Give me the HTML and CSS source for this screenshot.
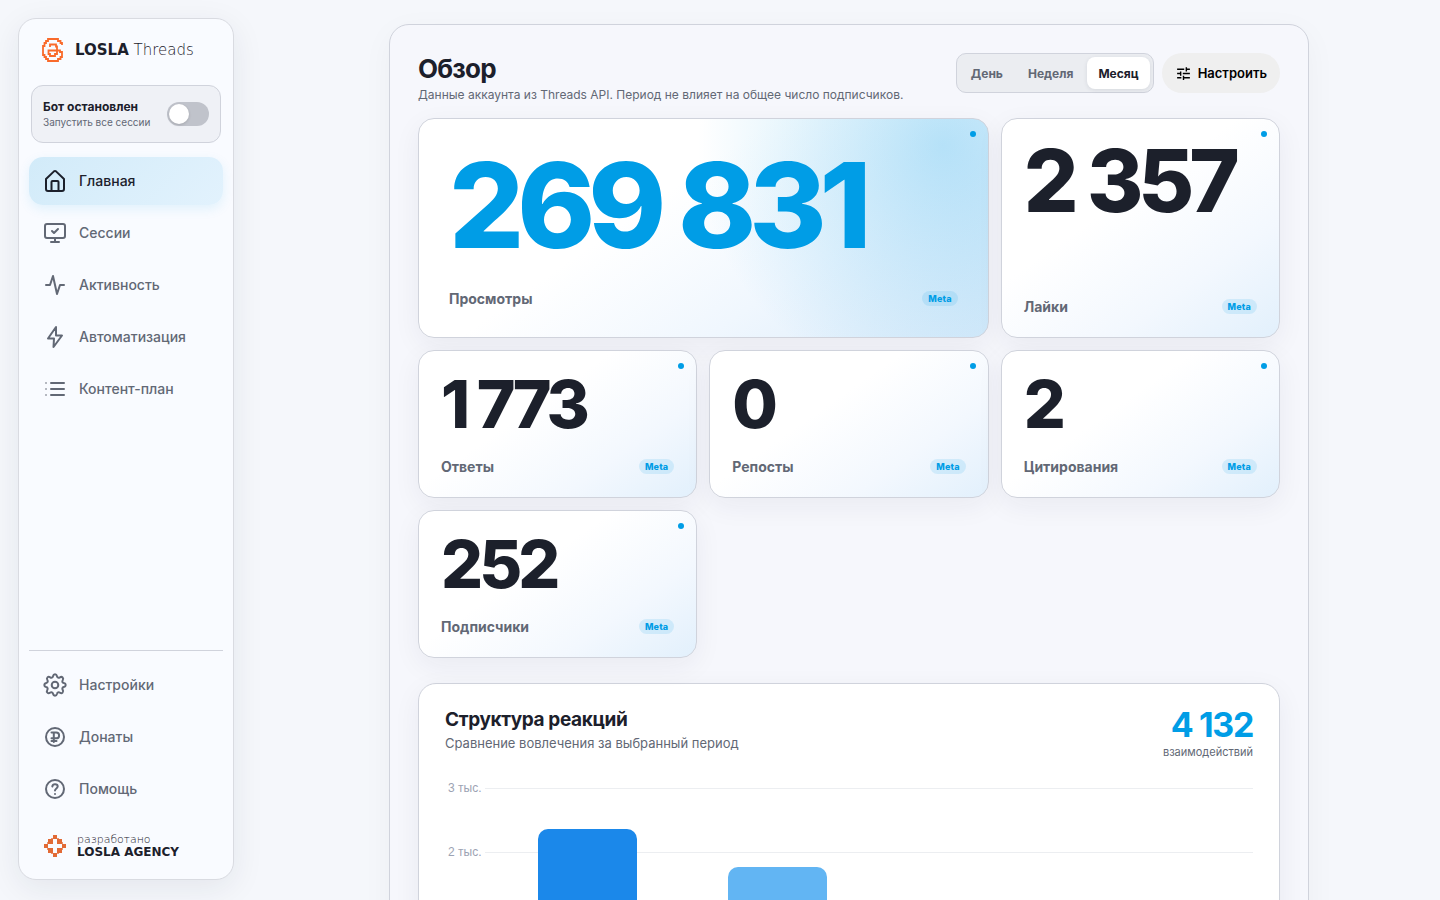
FILE: index.html
```html
<!DOCTYPE html>
<html lang="ru">
  <head>
    <meta charset="UTF-8" />
    <meta name="viewport" content="width=device-width, initial-scale=1.0" />
    <title>LOSLA Threads</title>
    <link rel="stylesheet" href="styles.css">
  </head>
  <body>
    <div class="app">
      <aside class="sidebar">
        <a class="brand" href="#">
          <svg class="brand-icon" viewBox="-1 0 24 24" fill="none" stroke="#f96a2b" stroke-width="1.8" aria-hidden="true">
            <path d="M20 7V5h-1.500V3H16V1H6v2H4v2H2.500v3H1v9h1.500v2H4v2h2v2h10v-2h2.500v-2H20v-5h-2v-1.500H6.500V16H8v2h5v-2h2V8.500h-1v-2H8V9" />
          </svg>
          <span class="brand-name"><b>LOSLA</b> <span>Threads</span></span>
        </a>

        <div class="bot">
          <label class="bot-text" for="botToggle">
            <strong>Бот остановлен</strong>
            <small>Запустить все сессии</small>
          </label>
          <input class="switch" type="checkbox" role="switch" id="botToggle" />
        </div>

        <nav class="nav">
          <a class="nav-item active" href="#">
            <svg viewBox="0 0 24 24"><path d="M3 10 10.700 2.600a2 2 0 0 1 2.600 0L21 10v10a2 2 0 0 1-2 2H5a2 2 0 0 1-2-2zM8.500 22v-9a1 1 0 0 1 1-1h5a1 1 0 0 1 1 1v9" /></svg>
            Главная
          </a>
          <a class="nav-item" href="#">
            <svg viewBox="0 0 24 24"><rect x="2" y="3" width="20" height="14" rx="2" /><path d="M8 21h8M12 17v4M9 10l2 2 4-4" /></svg>
            Сессии
          </a>
          <a class="nav-item" href="#">
            <svg viewBox="0 0 24 24"><path d="M3 12h4l3-9 4 18 3-9h4" /></svg>
            Активность
          </a>
          <a class="nav-item" href="#">
            <svg viewBox="0 0 24 24"><path d="M13 2 5 13.500h6L10.500 22 19 10.500h-6z" /></svg>
            Автоматизация
          </a>
          <a class="nav-item" href="#">
            <svg viewBox="0 0 24 24"><path d="M8 6h13M8 12h13M8 18h13" /><path class="dots" d="M3 6h.01M3 12h.01M3 18h.01" /></svg>
            Контент-план
          </a>
        </nav>

        <nav class="nav nav-bottom">
          <a class="nav-item" href="#">
            <svg viewBox="0 0 24 24"><path d="M10 3.200C10.300 1.800 11 1.300 12 1.300s1.700.5 2 1.900c.3 1.500 1.600 2 2.900 1.200 1.200-.8 2-.6 2.700.1s.8 1.500.1 2.700c-.8 1.300-.3 2.600 1.200 2.900 1.300.2 1.800.9 1.800 1.900s-.5 1.700-1.900 2c-1.400.3-1.900 1.600-1.100 2.900.8 1.200.6 2-.1 2.700s-1.500.8-2.700.1c-1.300-.8-2.600-.3-2.900 1.200-.3 1.300-1 1.800-2 1.800s-1.700-.5-2-1.900c-.3-1.400-1.600-1.900-2.900-1.100-1.200.7-2 .6-2.700-.1s-.8-1.500-.1-2.700c.8-1.300.3-2.600-1.200-2.900C1.800 13.700 1.300 13 1.300 12s.5-1.700 1.900-2c1.500-.3 2-1.600 1.200-2.900-.7-1.200-.6-2 .1-2.700s1.500-.8 2.700-.1C8.400 5.100 9.700 4.700 10 3.200z" /><circle cx="12" cy="12" r="3.300" /></svg>
            Настройки
          </a>
          <a class="nav-item" href="#">
            <svg viewBox="0 0 24 24"><circle cx="12" cy="12" r="9" /><path d="M10.800 17V7.500M8.500 7.500h4.700a2.900 2.900 0 0 1 0 5.800H8.500M8.500 16h5" /></svg>
            Донаты
          </a>
          <a class="nav-item" href="#">
            <svg viewBox="0 0 24 24"><circle cx="12" cy="12" r="9" /><path d="M9.300 9.500c.2-1.400 1.300-2.200 2.700-2.200 1.600 0 2.700 1 2.700 2.300 0 1.800-2.700 2-2.700 3.900M12 17h.01" /></svg>
            Помощь
          </a>
        </nav>

        <a class="agency" href="#">
          <svg class="agency-icon" viewBox="0 0 22 22" fill="#e26a35" aria-hidden="true">
            <path d="M9 0h4v4H9zM9 18h4v4H9zM0 9h4v4H0zM18 9h4v4h-4zM4 4h5v5H4zM13 4h5v5h-5zM4 13h5v5H4zM13 13h5v5h-5z" />
            <path opacity="0.7" d="M7 3h2v1H7zM13 3h2v1h-2zM3 7h1v2H3zM18 7h1v2h-1zM3 13h1v2H3zM18 13h1v2h-1zM7 18h2v1H7zM13 18h2v1h-2z" />
          </svg>
          <span class="agency-name"><span>разработано</span><b>LOSLA AGENCY</b></span>
        </a>
      </aside>

      <main class="main">
        <section class="panel">
          <header class="panel-head">
            <div>
              <h1>Обзор</h1>
              <p>Данные аккаунта из Threads API. Период не влияет на общее число подписчиков.</p>
            </div>
            <div class="controls">
              <div class="periods">
                <button type="button">День</button>
                <button type="button">Неделя</button>
                <button type="button" class="active">Месяц</button>
              </div>
              <button type="button" class="customize">
                <svg viewBox="0 0 24 24" fill="currentColor" aria-hidden="true"><path d="M3 17v2h6v-2H3zM3 5v2h10V5H3zm10 16v-2h8v-2h-8v-2h-2v6h2zM7 9v2H3v2h4v2h2V9H7zm14 4v-2H11v2h10zm-6-4h2V7h4V5h-4V3h-2v6z" /></svg>
                Настроить
              </button>
            </div>
          </header>

          <div class="stats">
            <article class="stat stat-main">
              <div class="value">269 831</div>
              <div class="stat-foot">Просмотры <span class="badge">Meta</span></div>
            </article>
            <article class="stat stat-tall">
              <div class="value">2 357</div>
              <div class="stat-foot">Лайки <span class="badge">Meta</span></div>
            </article>
            <article class="stat">
              <div class="value">1 773</div>
              <div class="stat-foot">Ответы <span class="badge">Meta</span></div>
            </article>
            <article class="stat">
              <div class="value">0</div>
              <div class="stat-foot">Репосты <span class="badge">Meta</span></div>
            </article>
            <article class="stat">
              <div class="value">2</div>
              <div class="stat-foot">Цитирования <span class="badge">Meta</span></div>
            </article>
            <article class="stat">
              <div class="value">252</div>
              <div class="stat-foot">Подписчики <span class="badge">Meta</span></div>
            </article>
          </div>

          <section class="chart-card">
            <header class="chart-head">
              <div>
                <h2>Структура реакций</h2>
                <p>Сравнение вовлечения за выбранный период</p>
              </div>
              <div class="total"><strong>4 132</strong><span>взаимодействий</span></div>
            </header>
            <div class="chart">
              <div class="grid-lines">
                <div class="tick">3 тыс.</div>
                <div class="tick">2 тыс.</div>
                <div class="tick"></div>
                <div class="tick"></div>
              </div>
              <div class="bars">
                <div class="bar likes" style="height: 78.57%"></div>
                <div class="bar replies" style="height: 59.1%"></div>
                <div class="bar reposts" style="height: 0%"></div>
                <div class="bar quotes" style="height: 0.07%"></div>
              </div>
            </div>
          </section>
        </section>
      </main>
    </div>
  </body>
</html>
```
FILE: styles.css
```css
:root {
  --text: #1c202b;
  --muted: #626875;
  --accent: #009de6;
  --border: #d0d3dc;
}
* {
  box-sizing: border-box;
}
body {
  margin: 0;
  background: #f5f7fb;
  color: var(--text);
  font-family: "Inter", "Noto Sans", sans-serif;
}
a {
  color: inherit;
  text-decoration: none;
}
button {
  font: inherit;
  border: none;
  cursor: pointer;
}
h1,
h2,
p {
  margin: 0;
}
.app {
  display: flex;
  align-items: flex-start;
  gap: 24px;
  padding-left: 18px;
}

/* Sidebar */
.sidebar {
  position: sticky;
  top: 18px;
  flex: 0 0 216px;
  display: flex;
  flex-direction: column;
  height: calc(100vh - 38px);
  margin-top: 18px;
  padding: 10px;
  background: #f9fbff;
  border: 1px solid #d9dbe1;
  border-radius: 18px;
  box-shadow: 0 8px 32px rgba(30, 40, 60, 0.08);
}
.brand {
  display: flex;
  align-items: center;
  gap: 10px;
  padding: 9px 12px;
}
.brand-icon {
  width: 24px;
  height: 24px;
}
.brand-name {
  font-family: "DejaVu Sans", sans-serif;
  font-size: 15px;
  line-height: 24px;
  white-space: nowrap;
}
.brand-name span {
  font-weight: 200;
}
.bot {
  display: flex;
  align-items: center;
  justify-content: space-between;
  margin: 14px 2px;
  height: 58px;
  padding: 0 11px;
  background: #eff1f6;
  border: 1px solid var(--border);
  border-radius: 12px;
}
.bot-text {
  display: flex;
  flex-direction: column;
  white-space: nowrap;
}
.bot-text strong {
  font-size: 12px;
  line-height: 16px;
}
.bot-text small {
  font-size: 10px;
  line-height: 14px;
  color: var(--muted);
}
.switch {
  appearance: none;
  width: 42px;
  height: 24px;
  margin: 0;
  padding: 2px;
  border-radius: 12px;
  background: #c0c3cb;
  cursor: pointer;
}
.switch::before {
  content: "";
  display: block;
  width: 20px;
  height: 20px;
  border-radius: 50%;
  background: #fff;
  box-shadow: 0 1px 3px rgba(0, 0, 0, 0.15);
}
.switch:checked {
  background: var(--accent);
}
.switch:checked::before {
  margin-left: auto;
}
.nav {
  display: flex;
  flex-direction: column;
  gap: 4px;
}
.nav-bottom {
  margin-top: auto;
  padding-top: 10px;
  border-top: 1px solid var(--border);
}
.nav-item {
  display: flex;
  align-items: center;
  gap: 12px;
  height: 48px;
  padding: 0 14px;
  border-radius: 14px;
  color: var(--muted);
  font-size: 14px;
  line-height: 18px;
  font-weight: 500;
}
.nav-item.active {
  color: var(--text);
  background: linear-gradient(135deg, #d2ebf9, #e2f2fd);
  box-shadow: 0 4px 12px rgba(0, 157, 230, 0.1);
}
.nav-item svg {
  width: 24px;
  height: 24px;
  fill: none;
  stroke: currentColor;
  stroke-width: 2;
  stroke-linecap: round;
  stroke-linejoin: round;
}
.nav-item .dots {
  opacity: 0.6;
}
.agency {
  display: flex;
  align-items: center;
  gap: 11px;
  padding: 21px 15px 11px;
}
.agency-icon {
  width: 22px;
  height: 22px;
}
.agency-name {
  display: flex;
  flex-direction: column;
  font-family: "DejaVu Sans", sans-serif;
  font-size: 11px;
  line-height: 12px;
  font-weight: 200;
  white-space: nowrap;
}
.agency-name b {
  font-size: 12px;
  font-weight: 700;
}

/* Overview panel */
.main {
  flex: 1;
  min-width: 0;
  padding: 24px 0;
}
.panel {
  max-width: 920px;
  margin: 0 auto;
  padding: 28px;
  background: #f6f7fc;
  border: 1px solid var(--border);
  border-radius: 20px;
  box-shadow: 0 8px 32px rgba(30, 40, 60, 0.04);
}
.panel-head {
  display: flex;
  justify-content: space-between;
  align-items: flex-start;
  margin-bottom: 15px;
}
h1 {
  font-size: 26px;
  line-height: 32px;
  letter-spacing: -0.03em;
}
.panel-head p {
  margin-top: 2px;
  font-size: 12px;
  line-height: 16px;
  color: var(--muted);
}
.controls {
  display: flex;
  gap: 8px;
  font-size: 12px;
  font-weight: 700;
}
.periods {
  display: flex;
  gap: 3px;
  height: 40px;
  padding: 3px;
  background: #ebedf1;
  border: 1px solid var(--border);
  border-radius: 10px;
}
.periods button {
  padding: 0 11px;
  border-radius: 8px;
  background: none;
  color: var(--muted);
}
.periods .active {
  background: #fff;
  color: var(--text);
  box-shadow: 0 1px 4px rgba(30, 40, 60, 0.1);
}
.customize {
  display: flex;
  align-items: center;
  gap: 6px;
  padding: 0 13px;
  border-radius: 20px;
  background: #efefef;
  color: #000;
  font-size: 13px;
  font-weight: 600;
}
.customize svg {
  width: 17px;
  height: 17px;
}

/* Stat cards */
.stats {
  display: grid;
  grid-template-columns: repeat(3, 1fr);
  gap: 12px;
}
.stat {
  position: relative;
  display: flex;
  flex-direction: column;
  justify-content: space-between;
  min-height: 148px;
  padding: 22px;
  background: linear-gradient(145deg, #fff 40%, #f3f8fe 72%, #e2f0fc);
  border: 1px solid var(--border);
  border-radius: 16px;
  box-shadow: 0 8px 28px rgba(30, 40, 60, 0.06);
}
.stat::after {
  content: "";
  position: absolute;
  top: 12px;
  right: 12px;
  width: 6px;
  height: 6px;
  border-radius: 50%;
  background: var(--accent);
}
.stat-main {
  grid-column: span 2;
  min-height: 220px;
  padding: 30px;
  background:
    radial-gradient(circle at 92% 12%, rgba(0, 157, 230, 0.25), transparent 44%),
    linear-gradient(145deg, #fff 40%, #f0f7fe 68%, #d9ebfa);
}
.value {
  font-size: 66px;
  line-height: 63px;
  font-weight: 800;
  letter-spacing: -0.06em;
  white-space: nowrap;
}
.stat-main .value {
  font-size: 118px;
  line-height: 112px;
  color: var(--accent);
}
.stat-tall .value {
  font-size: 86px;
  line-height: 81px;
}
.stat-foot {
  display: flex;
  align-items: flex-start;
  justify-content: space-between;
  font-size: 14px;
  line-height: 16px;
  font-weight: 700;
  color: var(--muted);
}
.badge {
  padding: 0 6px;
  border-radius: 8px;
  background: rgba(0, 157, 230, 0.12);
  color: var(--accent);
  font-size: 9px;
  line-height: 15px;
  font-weight: 800;
  letter-spacing: 0.02em;
}

/* Reactions chart */
.chart-card {
  margin-top: 25px;
  padding: 23px 26px 26px;
  background: #fff;
  border: 1px solid var(--border);
  border-radius: 18px;
  box-shadow: 0 8px 28px rgba(30, 40, 60, 0.06);
}
.chart-head {
  display: flex;
  justify-content: space-between;
}
h2 {
  font-size: 19px;
  line-height: 26px;
  letter-spacing: -0.02em;
}
.chart-head p {
  font-size: 13px;
  line-height: 20px;
  color: var(--muted);
}
.total {
  display: flex;
  flex-direction: column;
  text-align: right;
  font-size: 11px;
  line-height: 18px;
  color: var(--muted);
}
.total strong {
  color: var(--accent);
  font-size: 34px;
  line-height: 36px;
  letter-spacing: -0.04em;
}
.chart {
  display: grid;
  margin-top: 19px;
}
.grid-lines,
.bars {
  grid-area: 1 / 1;
}
.tick {
  display: flex;
  align-items: center;
  gap: 4px;
  height: 16px;
  padding-left: 3px;
  margin-bottom: 48px;
  font-family: "Liberation Sans", Arial, sans-serif;
  font-size: 12px;
  color: #9ca3b3;
}
.tick:last-child {
  margin-bottom: 0;
}
.tick::after {
  content: "";
  flex: 1;
  height: 1px;
  background: #eceef1;
}
.bars {
  display: grid;
  grid-template-columns: repeat(4, 1fr);
  align-items: end;
  justify-items: center;
  margin: 8px 0 8px 47px;
}
.bar {
  width: 52%;
  border-radius: 10px 10px 0 0;
}
.likes {
  background: #1b88ea;
}
.replies {
  background: #62b5f3;
}
.reposts,
.quotes {
  background: #a5d5f8;
}
```
